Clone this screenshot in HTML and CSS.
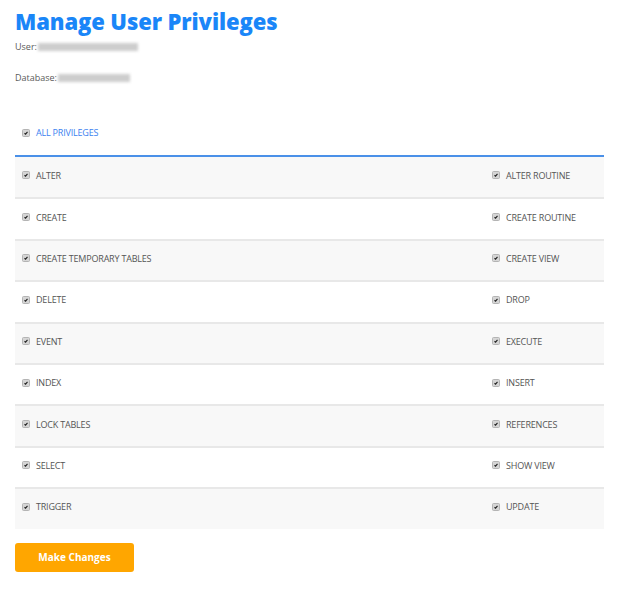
FILE: index.html
```html
<!DOCTYPE html>
<html>
<head>
<meta charset="utf-8">
<link rel="stylesheet" href="styles.css">
</head>
<body>
<div class="page">
  <h1 class="title">Manage User Privileges</h1>
  <p class="meta">User: <span class="blur blur-user"></span></p>
  <p class="meta meta-db">Database: <span class="blur blur-db"></span></p>

  <div class="all">
    <span class="cb"><svg viewBox="0 0 8 8"><path d="M2 4.3 L3.4 5.6 L6 2.4" /></svg></span>
    <span class="all-label">ALL PRIVILEGES</span>
  </div>

  <div class="table">
    <div class="row odd">
      <div class="cell"><span class="cb"><svg viewBox="0 0 8 8"><path d="M2 4.3 L3.4 5.6 L6 2.4" /></svg></span>ALTER</div>
      <div class="cell right"><span class="cb"><svg viewBox="0 0 8 8"><path d="M2 4.3 L3.4 5.6 L6 2.4" /></svg></span>ALTER ROUTINE</div>
    </div>
    <div class="row">
      <div class="cell"><span class="cb"><svg viewBox="0 0 8 8"><path d="M2 4.3 L3.4 5.6 L6 2.4" /></svg></span>CREATE</div>
      <div class="cell right"><span class="cb"><svg viewBox="0 0 8 8"><path d="M2 4.3 L3.4 5.6 L6 2.4" /></svg></span>CREATE ROUTINE</div>
    </div>
    <div class="row odd">
      <div class="cell"><span class="cb"><svg viewBox="0 0 8 8"><path d="M2 4.3 L3.4 5.6 L6 2.4" /></svg></span>CREATE TEMPORARY TABLES</div>
      <div class="cell right"><span class="cb"><svg viewBox="0 0 8 8"><path d="M2 4.3 L3.4 5.6 L6 2.4" /></svg></span>CREATE VIEW</div>
    </div>
    <div class="row">
      <div class="cell"><span class="cb"><svg viewBox="0 0 8 8"><path d="M2 4.3 L3.4 5.6 L6 2.4" /></svg></span>DELETE</div>
      <div class="cell right"><span class="cb"><svg viewBox="0 0 8 8"><path d="M2 4.3 L3.4 5.6 L6 2.4" /></svg></span>DROP</div>
    </div>
    <div class="row odd">
      <div class="cell"><span class="cb"><svg viewBox="0 0 8 8"><path d="M2 4.3 L3.4 5.6 L6 2.4" /></svg></span>EVENT</div>
      <div class="cell right"><span class="cb"><svg viewBox="0 0 8 8"><path d="M2 4.3 L3.4 5.6 L6 2.4" /></svg></span>EXECUTE</div>
    </div>
    <div class="row">
      <div class="cell"><span class="cb"><svg viewBox="0 0 8 8"><path d="M2 4.3 L3.4 5.6 L6 2.4" /></svg></span>INDEX</div>
      <div class="cell right"><span class="cb"><svg viewBox="0 0 8 8"><path d="M2 4.3 L3.4 5.6 L6 2.4" /></svg></span>INSERT</div>
    </div>
    <div class="row odd">
      <div class="cell"><span class="cb"><svg viewBox="0 0 8 8"><path d="M2 4.3 L3.4 5.6 L6 2.4" /></svg></span>LOCK TABLES</div>
      <div class="cell right"><span class="cb"><svg viewBox="0 0 8 8"><path d="M2 4.3 L3.4 5.6 L6 2.4" /></svg></span>REFERENCES</div>
    </div>
    <div class="row">
      <div class="cell"><span class="cb"><svg viewBox="0 0 8 8"><path d="M2 4.3 L3.4 5.6 L6 2.4" /></svg></span>SELECT</div>
      <div class="cell right"><span class="cb"><svg viewBox="0 0 8 8"><path d="M2 4.3 L3.4 5.6 L6 2.4" /></svg></span>SHOW VIEW</div>
    </div>
    <div class="row odd">
      <div class="cell"><span class="cb"><svg viewBox="0 0 8 8"><path d="M2 4.3 L3.4 5.6 L6 2.4" /></svg></span>TRIGGER</div>
      <div class="cell right"><span class="cb"><svg viewBox="0 0 8 8"><path d="M2 4.3 L3.4 5.6 L6 2.4" /></svg></span>UPDATE</div>
    </div>
  </div>

  <button class="btn">Make Changes</button>
</div>
</body>
</html>
```

FILE: styles.css
```css
* { box-sizing: border-box; }
body {
  margin: 0;
  background: #fff;
  font-family: "Open Sans", "Liberation Sans", sans-serif;
  color: #555;
}
.page {
  width: 604px;
  padding: 7px 0 0 15px;
}
.title {
  margin: 0;
  font-size: 22px;
  line-height: 28px;
  font-weight: 800;
  color: #1a86f8;
  letter-spacing: -0.1px;
}
.meta {
  margin: 5px 0 0;
  font-size: 9px;
  line-height: 14px;
  color: #5a5a5a;
  display: flex;
  align-items: center;
}
.meta-db { margin-top: 17px; }
.blur {
  display: inline-block;
  height: 8px;
  background: #cdcdcd;
  filter: blur(1.5px);
  margin-left: 1px;
}
.blur-user { width: 100px; }
.blur-db { width: 72px; }

.cb {
  display: inline-flex;
  width: 8px;
  height: 8px;
  background: #d6d6d6;
  border: 1px solid #b4b4b4;
  border-radius: 1.5px;
  margin-right: 6px;
  flex: none;
}
.cb svg {
  width: 100%;
  height: 100%;
  fill: none;
  stroke: #222;
  stroke-width: 1.5;
}

.all {
  display: flex;
  align-items: center;
  height: 42px;
  margin-top: 30px;
  padding-left: 7px;
  padding-bottom: 5px;
  font-size: 9px;
  color: #3b82f0;
  border-bottom: 2px solid #4a90e8;
}
.all-label { letter-spacing: -0.2px; }

.table {
  font-size: 9px;
  color: #555;
}
.row {
  display: grid;
  grid-template-columns: 1fr 119px;
  height: 41.4px;
  border-top: 2px solid #e8e8e8;
  background: #fff;
}
.row:first-child { border-top: none; height: 40.4px; }
.row.odd { background: #f8f8f8; }
.cell {
  display: flex;
  align-items: center;
  padding-left: 7px;
  letter-spacing: -0.2px;
  padding-bottom: 4px;
}
.btn {
  display: block;
  margin-top: 14px;
  width: 119px;
  height: 29px;
  border: none;
  border-radius: 3px;
  background: #ffa600;
  color: #fff;
  font-family: "Open Sans", "Liberation Sans", sans-serif;
  font-weight: 700;
  font-size: 10px;
  cursor: pointer;
}
```
